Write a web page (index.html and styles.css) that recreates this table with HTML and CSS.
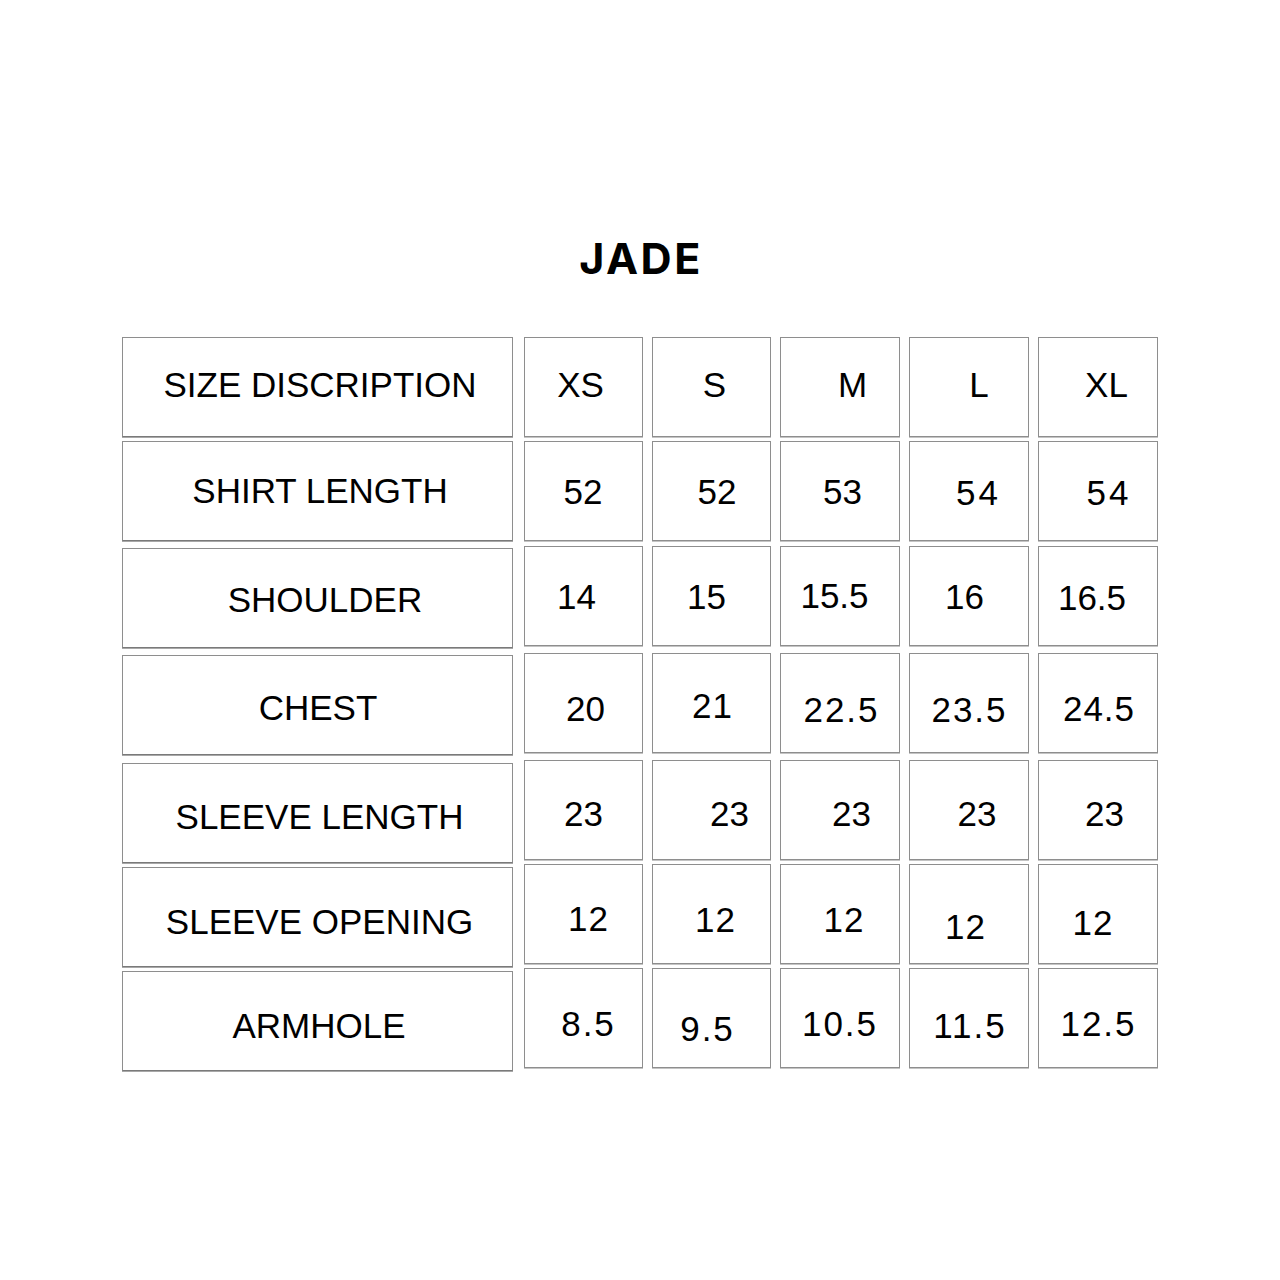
FILE: index.html
```
<!DOCTYPE html>
<html lang="en">
<head>
<meta charset="utf-8">
<title>JADE size chart</title>
<link rel="stylesheet" href="styles.css">
</head>
<body>
<div class="page">
  <h1 class="title">JADE</h1>
  <div class="chart">
    <div class="labels">
      <div class="cell label"><span style="--dx:2.5px;--dy:-1.5px">SIZE DISCRIPTION</span></div>
      <div class="cell label"><span style="--dx:2.5px;--dy:0.5px">SHIRT LENGTH</span></div>
      <div class="cell label"><span style="--dx:7.5px;--dy:2px">SHOULDER</span></div>
      <div class="cell label"><span style="--dx:0.5px;--dy:3px">CHEST</span></div>
      <div class="cell label"><span style="--dx:2px;--dy:4px">SLEEVE LENGTH</span></div>
      <div class="cell label"><span style="--dx:2px;--dy:5px">SLEEVE OPENING</span></div>
      <div class="cell label"><span style="--dx:1.5px;--dy:5px">ARMHOLE</span></div>
    </div>
    <div class="sizes">
      <div class="size-row">
        <div class="cell"><span style="--dx:-3px;--dy:-1.5px">XS</span></div>
        <div class="cell"><span style="--dx:3px;--dy:-1.5px">S</span></div>
        <div class="cell"><span style="--dx:12.5px;--dy:-1.5px">M</span></div>
        <div class="cell"><span style="--dx:10px;--dy:-1.5px">L</span></div>
        <div class="cell"><span style="--dx:8.5px;--dy:-1.5px">XL</span></div>
      </div>
      <div class="size-row">
        <div class="cell"><span style="--dx:-0.5px;--dy:1px">52</span></div>
        <div class="cell"><span style="--dx:5.5px;--dy:1px">52</span></div>
        <div class="cell"><span style="--dx:2.5px;--dy:1px">53</span></div>
        <div class="cell"><span style="--dx:8px;--dy:2.5px;--ls:3px">54</span></div>
        <div class="cell"><span style="--dx:9.5px;--dy:2.5px;--ls:3px">54</span></div>
      </div>
      <div class="size-row">
        <div class="cell"><span style="--dx:-7px;--dy:1px">14</span></div>
        <div class="cell"><span style="--dx:-5px;--dy:1px">15</span></div>
        <div class="cell"><span style="--dx:-5.5px;--dy:0px">15.5</span></div>
        <div class="cell"><span style="--dx:-4.5px;--dy:1px">16</span></div>
        <div class="cell"><span style="--dx:-6px;--dy:2px">16.5</span></div>
      </div>
      <div class="size-row">
        <div class="cell"><span style="--dx:2px;--dy:6px">20</span></div>
        <div class="cell"><span style="--dx:0.5px;--dy:3px;--ls:1px">21</span></div>
        <div class="cell"><span style="--dx:0.5px;--dy:7px;--ls:2px">22.5</span></div>
        <div class="cell"><span style="--dx:-0.5px;--dy:7px;--ls:2px">23.5</span></div>
        <div class="cell"><span style="--dx:0.5px;--dy:6px;--ls:1px">24.5</span></div>
      </div>
      <div class="size-row">
        <div class="cell"><span style="--dx:0px;--dy:4px">23</span></div>
        <div class="cell"><span style="--dx:18px;--dy:4px">23</span></div>
        <div class="cell"><span style="--dx:11.5px;--dy:4px">23</span></div>
        <div class="cell"><span style="--dx:8px;--dy:4px">23</span></div>
        <div class="cell"><span style="--dx:6.5px;--dy:4px">23</span></div>
      </div>
      <div class="size-row">
        <div class="cell"><span style="--dx:4.5px;--dy:5px;--ls:1px">12</span></div>
        <div class="cell"><span style="--dx:3.5px;--dy:6px;--ls:1px">12</span></div>
        <div class="cell"><span style="--dx:3.5px;--dy:6px;--ls:1px">12</span></div>
        <div class="cell"><span style="--dx:-4px;--dy:13px;--ls:1px">12</span></div>
        <div class="cell"><span style="--dx:-5.5px;--dy:9px;--ls:1px">12</span></div>
      </div>
      <div class="size-row">
        <div class="cell"><span style="--dx:4px;--dy:6px;--ls:2px">8.5</span></div>
        <div class="cell"><span style="--dx:-5px;--dy:11px;--ls:2px">9.5</span></div>
        <div class="cell"><span style="--dx:-1px;--dy:6px;--ls:2px">10.5</span></div>
        <div class="cell"><span style="--dx:0px;--dy:8px;--ls:2px">11.5</span></div>
        <div class="cell"><span style="--dx:-0.5px;--dy:6px;--ls:2px">12.5</span></div>
      </div>
    </div>
  </div>
</div>
</body>
</html>
```
FILE: styles.css
```
* { box-sizing: border-box; }

html, body {
  margin: 0;
  padding: 0;
  background: #ffffff;
}

.page {
  width: 1280px;
  height: 1280px;
  padding-top: 228px;
  font-family: "Liberation Sans", Arial, sans-serif;
  color: #000;
}

.title {
  margin: 0;
  height: 60px;
  line-height: 60px;
  text-align: center;
  font-family: Inter, "Noto Sans", sans-serif;
  font-weight: 700;
  font-size: 43px;
  letter-spacing: 2.5px;
  padding-left: 2px;
}

.chart {
  margin-top: 49px;
  padding-left: 122px;
  display: flex;
  gap: 11px;
  align-items: flex-start;
}

.labels {
  width: 391px;
  display: flex;
  flex-direction: column;
}

.sizes {
  display: flex;
  flex-direction: column;
}

.size-row {
  display: grid;
  grid-template-columns: 119px 119px 120px 120px 120px;
  column-gap: 9px;
}

.cell {
  height: 100px;
  border: 1px solid #8e8e8e;
  box-shadow: 0 1px 0 #c4c4c4;
  background: #fff;
  display: flex;
  align-items: center;
  justify-content: center;
  font-size: 35px;
  line-height: 35px;
}

.label {
  width: 391px;
  border-bottom-color: #7a7a7a;
  box-shadow: 0 1px 0 #a8a8a8;
}

.cell span {
  display: block;
  white-space: nowrap;
  letter-spacing: var(--ls, 0px);
  margin-right: calc(-1 * var(--ls, 0px));
  transform: translate(var(--dx, 0px), calc(var(--dy, 0px) - 1.5px));
}

/* vertical spacing between rows */
.labels .cell:nth-child(2) { margin-top: 4px; }
.labels .cell:nth-child(3) { margin-top: 7px; }
.labels .cell:nth-child(4) { margin-top: 7px; }
.labels .cell:nth-child(5) { margin-top: 8px; }
.labels .cell:nth-child(6) { margin-top: 4px; }
.labels .cell:nth-child(7) { margin-top: 4px; }

.sizes .size-row:nth-child(2) { margin-top: 4px; }
.sizes .size-row:nth-child(3) { margin-top: 5px; }
.sizes .size-row:nth-child(4) { margin-top: 7px; }
.sizes .size-row:nth-child(5) { margin-top: 7px; }
.sizes .size-row:nth-child(6) { margin-top: 4px; }
.sizes .size-row:nth-child(7) { margin-top: 4px; }
```
